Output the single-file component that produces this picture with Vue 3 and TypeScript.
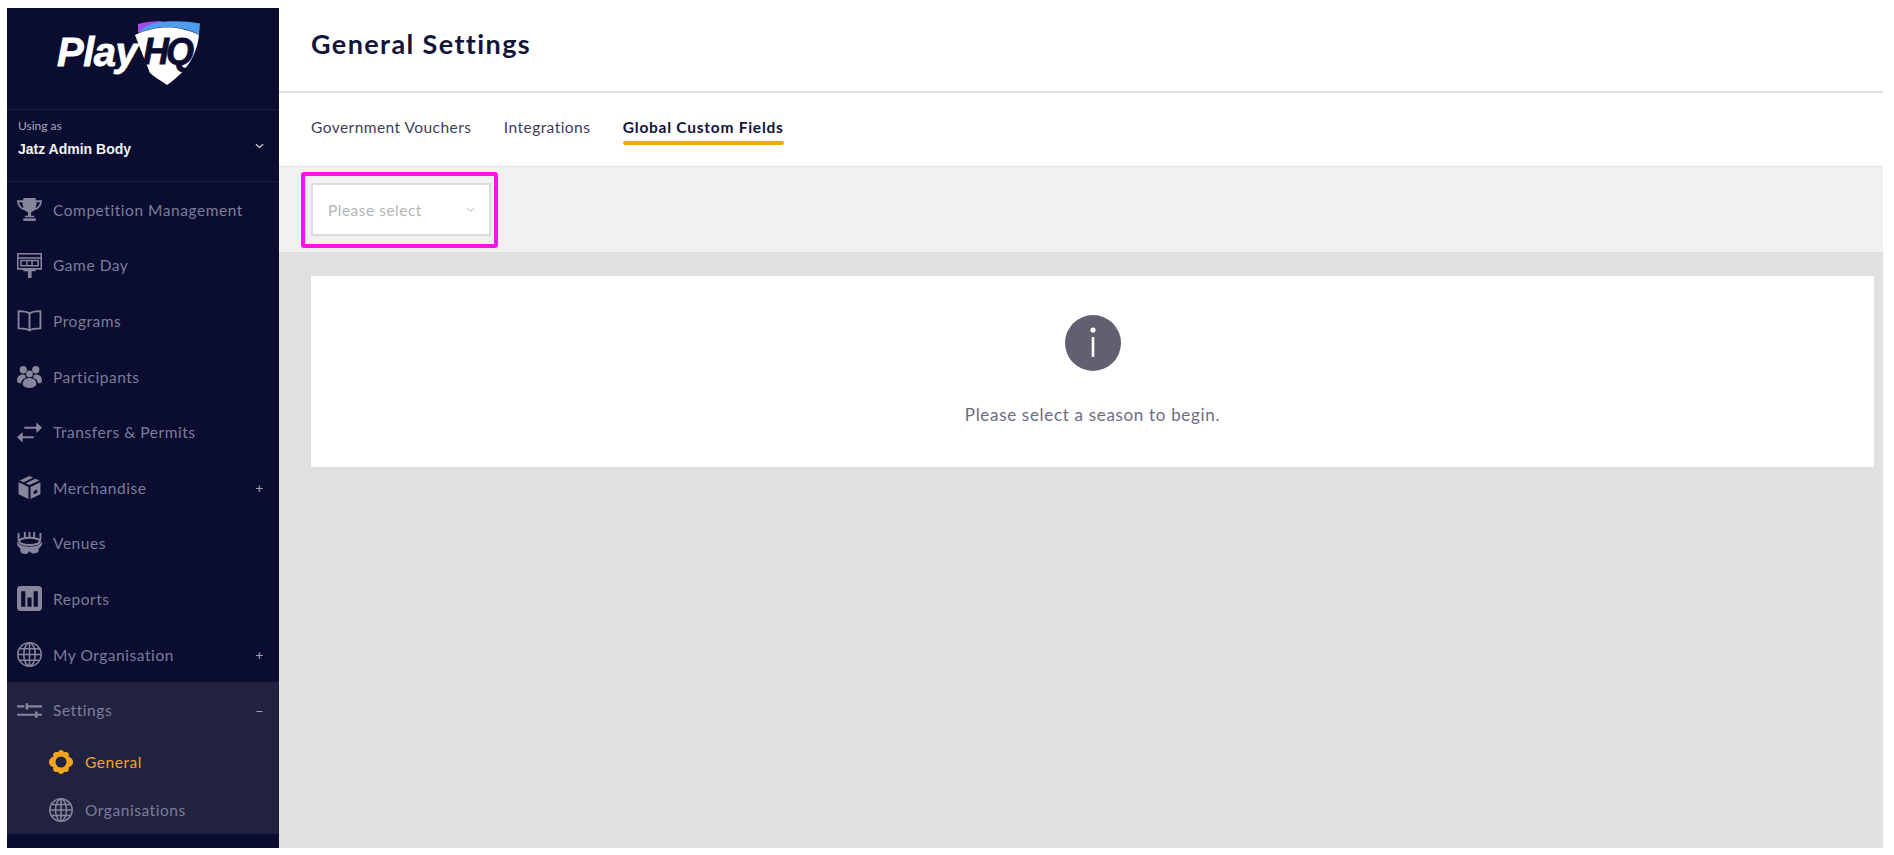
<script setup lang="ts">
interface NavItem {
  label: string
  icon: string
  sign?: string
}

const items: NavItem[] = [
  { label: 'Competition Management', icon: 'trophy' },
  { label: 'Game Day', icon: 'board' },
  { label: 'Programs', icon: 'book' },
  { label: 'Participants', icon: 'people' },
  { label: 'Transfers & Permits', icon: 'swap' },
  { label: 'Merchandise', icon: 'box', sign: '+' },
  { label: 'Venues', icon: 'venue' },
  { label: 'Reports', icon: 'report' },
  { label: 'My Organisation', icon: 'globe', sign: '+' }
]
const tabs = ['Government Vouchers', 'Integrations', 'Global Custom Fields']
</script>

<template>
  <div class="page">
    <div class="frame">
      <aside class="side">
        <div class="brand">
          <span class="play">Play</span>
          <span class="shield">
            <svg class="shield-bg" viewBox="0 0 85 75" width="85" height="75" aria-hidden="true">
              <path d="M13 17 L13 9 C20 7 28 6 37 6 L32 12 C24 12 18 14 14 18 Z" fill="#a24bea" />
              <path d="M14 18 C19 10 30 7 42 6.500 C54 6 65 6.500 75 8.500 L74 20 C62 11 32 9 14 18 Z" fill="#4c9cf0" />
              <path d="M10 20 C30 10 55 10 74 20 C72 38 64 55 42 70 C35 65 29 62 25 58 L15 33 Z" fill="#fff" />
            </svg>
            <span class="hq">HQ</span>
          </span>
        </div>
        <div class="using">
          <div class="using-text">
            <div class="using-as">Using as</div>
            <div class="using-name">Jatz Admin Body</div>
          </div>
          <svg class="chev" viewBox="0 0 10 6" width="9" height="6" aria-hidden="true">
            <path d="M1 1l4 3.500L9 1" fill="none" stroke="#c9c9d4" stroke-width="1.400" />
          </svg>
        </div>
        <nav>
          <div v-for="item in items" :key="item.label" class="row">
            <svg class="ico" viewBox="0 0 24 24" width="25" height="25" aria-hidden="true">
              <template v-if="item.icon === 'trophy'">
                <path fill-rule="evenodd" d="M6 1h12v2h6c0 5-3 8.500-7 9.500-1 1-2 1.700-3.500 2V18h3v1.500h-9V18h3v-3.500C9 14.200 8 13.500 7 12.500 3 11.500 0 8 0 3h6V1zM2 5c.4 2.800 2 4.700 4.300 5.500C5.700 9 5.300 7.200 5.200 5H2zm20 0h-3.200c-.1 2.200-.5 4-1.100 5.500C20 9.700 21.600 7.800 22 5z" />
                <rect x="6" y="20.500" width="12" height="2.500" />
              </template>
              <template v-else-if="item.icon === 'board'">
                <path fill-rule="evenodd" d="M0 0h24v16h-6v1.500h-4V24h-3.500v-6.500H6V16H0V0zm1.500 1.500V4h21V1.500h-21zm0 4v9h21v-9h-21z" />
                <path fill-rule="evenodd" d="M3 6.500h18v6.500H3V6.500zm1.500 1.500v3.500H9V8H4.500zm5.800 0v3.500h3.400V8h-3.400zm4.900 0v3.500h4.300V8h-4.300z" />
              </template>
              <template v-else-if="item.icon === 'book'">
                <path d="M12 5.500C10 3.500 6 3 1.500 3v16.500c4.500 0 8.500.5 10.500 2 2-1.500 6-2 10.500-2V3C18 3 14 3.500 12 5.500zm0 0v16" fill="none" stroke="currentColor" stroke-width="1.800" />
              </template>
              <template v-else-if="item.icon === 'people'">
                <circle cx="6" cy="5.500" r="3.500" />
                <circle cx="18" cy="5.500" r="3.500" />
                <circle cx="12" cy="9.500" r="3.200" />
                <path d="M0 16c0-4 2.500-6 5.500-6 1 0 2 .2 2.600.8C8.500 12.500 9 13.500 6 14.500 4.500 16 4 17.500 4 18.500 1.500 18.500 0 17.500 0 16zM24 16c0-4-2.500-6-5.500-6-1 0-2 .2-2.600.8-.4 1.700-.9 2.700 2.100 3.700 1.500 1.500 2 3 2 4 2.500 0 4-1 4-2.500z" />
                <path d="M5.500 19c0-3.500 3-5.500 6.500-5.500s6.500 2 6.500 5.500c0 2.500-3 4-6.500 4s-6.500-1.500-6.500-4z" />
              </template>
              <template v-else-if="item.icon === 'swap'">
                <path d="M7 6.500h11.500V2.500L24 7.500l-5.500 5V8.500H7v-2zM0 16.500l5.500-5v4H16v2H5.500v4L0 16.500z" />
              </template>
              <template v-else-if="item.icon === 'box'">
                <path d="M12 1l3.500 1.500-9 4.500L2.500 5.300 12 1zM17.500 3.500l4 1.800-9.500 4.400-3.800-1.800 9.300-4.400zM1.500 7l9.500 4.500V23L1.500 18.500V7zM22.500 7v11.500L13 23V11.500L22.500 7z" />
                <path d="M16 15.500l3.500-1.500v3l-3.500 1.500z" fill="#0a0c30" />
              </template>
              <template v-else-if="item.icon === 'venue'">
                <path d="M1.500 2v7M7.500 1v5M12 1v5M16.500 1v5M22.500 2v7" fill="none" stroke="currentColor" stroke-width="1.800" />
                <ellipse cx="12" cy="10" rx="10" ry="3.500" fill="none" stroke="currentColor" stroke-width="2" />
                <path d="M0 10c1 3 6 5 12 5s11-2 12-5v3c-1 2.500-2 3-3 3.500l-.5 3.500c-2 1.800-5 2-6.500 1L12 19.500 10 21.500c-1.500 1-4.500.8-6.500-1L3 16.500C2 16 1 15.500 0 13v-3z" />
              </template>
              <template v-else-if="item.icon === 'report'">
                <path fill-rule="evenodd" d="M3.500 0h17A3.500 3.500 0 0124 3.500v17a3.500 3.500 0 01-3.500 3.500h-17A3.500 3.500 0 010 20.500v-17A3.500 3.500 0 013.500 0zM4 5v15h4V5H4zm6 6v9h4v-9h-4zm6-6v15h4V5h-4z" />
              </template>
              <template v-else-if="item.icon === 'globe'">
                <g fill="none" stroke="currentColor" stroke-width="1.500">
                  <circle cx="12" cy="12" r="11.200" />
                  <ellipse cx="12" cy="12" rx="5.500" ry="11" />
                  <path d="M12 1v22M3 6.500h18M1 12h22M3 17.500h18" />
                </g>
              </template>
            </svg>
            <span class="label">{{ item.label }}</span>
            <span v-if="item.sign" class="sign">{{ item.sign }}</span>
          </div>
          <div class="open">
            <div class="row">
              <svg class="ico" viewBox="0 0 24 24" width="25" height="25" aria-hidden="true">
                <path d="M0 8h7M10 8h14M0 16h17M17 16h7" fill="none" stroke="currentColor" stroke-width="2" />
                <path d="M9.500 5v6M18.500 13v6" fill="none" stroke="currentColor" stroke-width="2.500" />
              </svg>
              <span class="label">Settings</span>
              <span class="sign">−</span>
            </div>
            <div class="sub sub-active">
              <svg class="ico" viewBox="0 0 24 24" width="25" height="25" aria-hidden="true">
                <path fill-rule="evenodd" fill="#f5a51c" d="M12 0c1.500 0 2.500 1 3 2.300 1.400-.6 2.900-.5 4 .5 1 1 1.100 2.500.6 3.900C21 7.200 24 8.500 24 12s-3 4.800-4.400 5.300c.5 1.400.4 2.900-.6 3.900-1.100 1-2.600 1.100-4 .5-.5 1.300-1.500 2.300-3 2.300s-2.500-1-3-2.300c-1.400.6-2.900.5-4-.5-1-1-1.100-2.500-.6-3.900C3 16.800 0 15.500 0 12s3-4.800 4.400-5.300c-.5-1.400-.4-2.900.6-3.900 1.100-1 2.600-1.100 4-.5C9.500 1 10.500 0 12 0zm0 6.500a5.500 5.500 0 100 11 5.500 5.500 0 000-11z" />
              </svg>
              <span class="label">General</span>
            </div>
            <div class="sub">
              <svg class="ico" viewBox="0 0 24 24" width="25" height="25" aria-hidden="true">
                <g fill="none" stroke="currentColor" stroke-width="1.500">
                  <circle cx="12" cy="12" r="11.200" />
                  <ellipse cx="12" cy="12" rx="5.500" ry="11" />
                  <path d="M12 1v22M3 6.500h18M1 12h22M3 17.500h18" />
                </g>
              </svg>
              <span class="label">Organisations</span>
            </div>
          </div>
        </nav>
      </aside>
      <main class="main">
        <header class="head"><h1>General Settings</h1></header>
        <div class="tabs">
          <span
            v-for="(tab, i) in tabs"
            :key="tab"
            class="tab"
            :class="{ 'tab-active': i === 2 }"
          >{{ tab }}</span>
        </div>
        <div class="filter">
          <div class="select-wrap">
            <div class="select">
              <span>Please select</span>
              <svg viewBox="0 0 10 6" width="9" height="6" aria-hidden="true">
                <path d="M1 1l4 3.500L9 1" fill="none" stroke="#c4c4c4" stroke-width="1.200" />
              </svg>
            </div>
            <div class="mark"></div>
          </div>
        </div>
        <div class="content">
          <section class="card">
            <div class="info">
              <svg viewBox="0 0 56 56" width="56" height="56" aria-hidden="true">
                <circle cx="28" cy="28" r="28" fill="#625f70" />
                <circle cx="28" cy="15" r="2.600" fill="#fff" />
                <rect x="26.700" y="22" width="2.600" height="20" fill="#fff" />
              </svg>
            </div>
            <p>Please select a season to begin.</p>
          </section>
        </div>
      </main>
    </div>
  </div>
</template>

<style>
html, body {
  margin: 0;
  background: #fff;
}
</style>

<style scoped>
.page {
  box-sizing: border-box;
  height: 855px;
  padding: 8px 11px 7px 7px;
  font-family: Lato, "Open Sans", sans-serif;
  overflow: hidden;
}
.frame {
  display: flex;
  height: 100%;
}
.side {
  width: 272px;
  flex: none;
  background: #0a0c30;
  color: #85869c;
  display: flex;
  flex-direction: column;
}
.brand {
  height: 102px;
  flex: none;
  box-sizing: border-box;
  border-bottom: 1px solid #1b1c40;
  display: flex;
  align-items: flex-start;
  padding: 7px 0 0 50px;
}
.play {
  flex: none;
  width: 78px;
  font-family: "Liberation Sans", Arial, sans-serif;
  font-style: italic;
  font-weight: 700;
  font-size: 40px;
  letter-spacing: -0.500px;
  -webkit-text-stroke: 0.800px #fff;
  color: #fff;
  margin-top: 15px;
  position: relative;
  z-index: 1;
}
.shield {
  position: relative;
  flex: none;
  width: 85px;
  height: 75px;
  margin-left: -10px;
}
.shield-bg {
  display: block;
}
.hq {
  position: absolute;
  left: 18px;
  top: 16px;
  font-family: "Liberation Sans", Arial, sans-serif;
  font-style: italic;
  font-weight: 700;
  font-size: 36px;
  letter-spacing: -3px;
  -webkit-text-stroke: 0.800px #0a0c30;
  color: #0a0c30;
}
.using {
  height: 72px;
  flex: none;
  box-sizing: border-box;
  border-bottom: 1px solid #1b1c40;
  display: flex;
  align-items: center;
  justify-content: space-between;
  padding: 0 15px 0 11px;
}
.using-text {
  margin-top: -15px;
}
.using-as {
  font-size: 12px;
  color: #a8a8b8;
  line-height: 16px;
}
.using-name {
  font-family: "Liberation Sans", Arial, sans-serif;
  font-size: 14px;
  font-weight: 700;
  color: #f2f2f5;
  line-height: 18px;
  margin-top: 6px;
}
nav {
  display: flex;
  flex-direction: column;
}
.row {
  height: 55.600px;
  flex: none;
  display: flex;
  align-items: center;
  padding: 0 15px 0 10px;
  font-size: 15.500px;
  letter-spacing: 0.550px;
}
.ico {
  flex: none;
  fill: currentColor;
  color: #85869c;
}
.label {
  margin-left: 11px;
  flex: 1;
  color: #7c7e99;
}
.sign {
  color: #a0a1b3;
  font-size: 14px;
}
.open {
  background: #212240;
  height: 152px;
}
.sub {
  height: 48px;
  display: flex;
  align-items: center;
  padding-left: 42px;
  font-size: 15.500px;
  letter-spacing: 0.550px;
}
.sub .ico {
  width: 24px;
  height: 24px;
}
.sub .label {
  margin-left: 12px;
}
.sub-active .label {
  color: #f5a51c;
}
.main {
  flex: 1;
  min-width: 0;
  display: flex;
  flex-direction: column;
  background: #e0e0e0;
}
.head {
  height: 85px;
  flex: none;
  box-sizing: border-box;
  background: #fff;
  border-bottom: 2px solid #e2e2e2;
  display: flex;
  align-items: center;
  padding-left: 32px;
}
h1 {
  margin: 0 0 12px;
  font-size: 27px;
  font-weight: 700;
  letter-spacing: 1.400px;
  color: #12143a;
}
.tabs {
  height: 74px;
  flex: none;
  box-sizing: border-box;
  background: #fff;
  border-bottom: 1px solid #e4e4e4;
  display: flex;
  align-items: flex-start;
  gap: 32.500px;
  padding: 22px 0 0 32px;
}
.tab {
  font-size: 15.500px;
  line-height: 24px;
  padding-bottom: 4px;
  letter-spacing: 0.450px;
  color: #3d3e57;
}
.tab-active {
  font-weight: 700;
  letter-spacing: 0.750px;
  color: #12143a;
  position: relative;
}
.tab-active::after {
  content: "";
  position: absolute;
  left: 0;
  right: 0;
  bottom: -2px;
  height: 4px;
  border-radius: 2px;
  background: #f5a51c;
}
.filter {
  height: 85px;
  flex: none;
  background: #f1f1f1;
  display: flex;
  align-items: center;
  padding-left: 32px;
}
.select-wrap {
  position: relative;
}
.select {
  box-sizing: border-box;
  width: 180px;
  height: 53px;
  background: #fff;
  border: 2px solid #dcdcdc;
  display: flex;
  align-items: center;
  justify-content: space-between;
  padding: 0 14px 0 15px;
  font-size: 15.500px;
  letter-spacing: 0.500px;
  color: #b5b5b5;
}
.mark {
  position: absolute;
  left: -10px;
  top: -11px;
  right: -7px;
  bottom: -12px;
  border: 4px solid #ff10f0;
  border-radius: 3px;
  pointer-events: none;
}
.content {
  flex: 1;
  padding: 24px 9px 0 32px;
}
.card {
  height: 191px;
  box-sizing: border-box;
  background: #fff;
  display: flex;
  flex-direction: column;
  align-items: center;
  padding-top: 39px;
}
.info svg {
  display: block;
}
p {
  margin: 32px 0 0;
  font-size: 17px;
  line-height: 24px;
  letter-spacing: 0.680px;
  color: #6f6c7f;
}
</style>
